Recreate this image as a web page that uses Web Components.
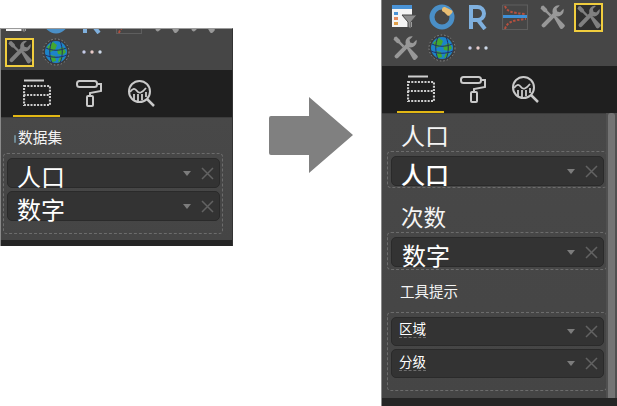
<!DOCTYPE html>
<html><head><meta charset="utf-8"><style>
html,body{margin:0;background:#fff}
body{width:617px;height:406px;overflow:hidden;font-family:"Noto Sans CJK SC",sans-serif}
#page{display:grid;grid-template-columns:233px 148px 236px;height:406px}
</style></head><body>
<div id="page">
<pbi-pane style="--top:28px;--bottom:6px;--h:218px;--tabpl:12px;--cpl:2px">
  <pane-toolbar slot="toolbar" style="height:41px;--pl:0px">
    <tool-icon name="doc"></tool-icon><tool-icon name="donut"></tool-icon><tool-icon name="r"></tool-icon><tool-icon name="chart"></tool-icon><tool-icon name="wrench"></tool-icon><tool-icon name="wrench"></tool-icon>
    <tool-icon name="wrench" selected></tool-icon><tool-icon name="globe"></tool-icon><tool-icon name="dots"></tool-icon>
  </pane-toolbar>
  <field-label size="14.7" top="11" left="11" marker>数据集</field-label>
  <field-well style="--mt:8px;--pb:12px">
    <field-pill size="24" left="10" dy="3">人口</field-pill>
    <field-pill size="24" left="10" dy="3">数字</field-pill>
  </field-well>
</pbi-pane>
<big-arrow></big-arrow>
<pbi-pane style="--top:0px;--bottom:8px;--h:406px;--tabpl:15px;--cpl:5px" scroll>
  <pane-toolbar slot="toolbar" style="height:66px;--pl:5px">
    <tool-icon name="doc"></tool-icon><tool-icon name="donut"></tool-icon><tool-icon name="r"></tool-icon><tool-icon name="chart"></tool-icon><tool-icon name="wrench"></tool-icon><tool-icon name="wrench" selected></tool-icon>
    <tool-icon name="wrench"></tool-icon><tool-icon name="globe"></tool-icon><tool-icon name="dots"></tool-icon>
  </pane-toolbar>
  <field-label size="24" top="8" left="14">人口</field-label>
  <field-well style="--mt:3px;--pb:1px">
    <field-pill size="24" left="10" dy="3" bold>人口</field-pill>
  </field-well>
  <field-label size="22.5" top="16" left="14">次数</field-label>
  <field-well style="--mt:3px;--pb:2px">
    <field-pill size="24" left="11" dy="3">数字</field-pill>
  </field-well>
  <field-label size="14.5" top="13" left="13">工具提示</field-label>
  <field-well style="--mt:13px;--pb:12px">
    <field-pill size="13.5" left="8" dy="-4" h="29" ghost>区域</field-pill>
    <field-pill size="13.5" left="8" dy="-3" h="29" ghost>分级</field-pill>
  </field-well>
</pbi-pane>
</div>
<script>
const wrench=(c)=>`<svg viewBox="0 0 26 26" width="26" height="26"><g fill="${c}"><path d="M2.500 2l2-.5 3.500 3.500.5 1.800 4 4-1.700 1.700-4-4L5 8 1.500 4.500zM14.500 13l1.800-1.800 8.700 9a2 2 0 0 1 0 3l-1 1a2 2 0 0 1-3 0z"/><path d="M24.500 4.800a6 6 0 0 1-7.800 7.200L6.200 22.800a2 2 0 0 1-3-2.900L13.800 9.200A6 6 0 0 1 20.800 1.500l-3.300 3.300.7 2.700 2.800.7z"/></g></svg>`;
const ICONS={
doc:`<svg viewBox="0 0 26 26" width="26" height="26"><path fill="#f4f4f4" d="M0 1h20v22H0z"/><path fill="#4a93d6" d="M0 1h20v4H0z"/><path fill="#4a93d6" d="M2 8h4v3H2z"/><path fill="#e38a5e" d="M2 13h4v3H2z"/><path fill="#e0a04a" d="M2 18h4v3H2z"/><path fill="#8d8d8d" stroke="#464646" d="M10 11h15l-6 7v7l-3-2v-5z"/></svg>`,
donut:`<svg viewBox="0 0 26 26" width="26" height="26"><circle cx="13" cy="13" r="10" fill="none" stroke="#4a8fc7" stroke-width="5"/><path d="M16 3l6 3a2 2 0 0 1 1 3l-2 2a2 2 0 0 1-3 0l-3-3a2 2 0 0 1 1-5z" fill="#e8bd73"/></svg>`,
r:`<svg viewBox="0 0 26 26" width="26" height="26"><path fill="none" stroke="#7fb0de" stroke-width="4" d="M6 25V3h6.500a6 6 0 0 1 0 13H6m7 0l7 9"/></svg>`,
chart:`<svg viewBox="0 0 26 26" width="26" height="26"><path fill="none" stroke="#5e5e5e" stroke-width="1.200" d="M.5 1v25M.5 25.500H26M25.500 1v25M.5 1H26"/><path fill="none" stroke="#b5503f" stroke-width="2" stroke-dasharray="2.500 1.500" d="M3 2c2 6 8 7 21 8M3 25c2-7 8-9 21-10"/><path stroke="#3f90d6" stroke-width="3" d="M1 12.500h24"/></svg>`,
wrench:wrench("#989898"),
wrenchSel:wrench("#808080"),
globe:`<svg viewBox="0 0 28 28" width="28" height="28"><circle cx="14" cy="14" r="13" fill="#3c3c3c" stroke="#8a8a8a" stroke-dasharray="1.500 2"/><circle cx="14" cy="14" r="11" fill="#1d84c8"/><path fill="#44a82f" d="M5 9l6-5 4 3-2 5-5 2zM15 12l6-3 3 5-3 3-5-1zM8 17l5 1 1 5-4 1zM18 19l3 0-2 4-3 1z"/><path fill="none" stroke="#22306a" stroke-width="1" d="M4 10c6 3 14 3 20 0M3 17c7 3 15 3 22 0M10 3c-3 7-3 15 0 22M18 3c3 7 3 15 0 22"/></svg>`,
dots:`<svg viewBox="0 0 26 8" width="26" height="8"><circle cx="5" cy="4" r="1.700" fill="#c5cbe8"/><circle cx="13" cy="4" r="1.700" fill="#e9cbc8"/><circle cx="21" cy="4" r="1.700" fill="#cdd9e8"/></svg>`
};
class Base extends HTMLElement{
  root(html){const r=this.attachShadow({mode:"open"});r.innerHTML=html;return r}
}
customElements.define("tool-icon",class extends Base{connectedCallback(){
  const n=this.getAttribute("name");const sel=this.hasAttribute("selected");
  this.root(`<style>:host{display:flex;align-items:center;justify-content:center;width:36.6px;height:31px;flex:none}
  .w{display:flex;align-items:center;justify-content:center;filter:blur(.55px)}
  .s{width:25px;height:25px;border:2px solid #f0cd3e;background:#2f2f2f;filter:blur(.4px)}</style>
  <div class="w ${sel?"s":""}">${ICONS[sel?"wrenchSel":n]}</div>`);
}});
customElements.define("pane-toolbar",class extends Base{connectedCallback(){
  this.root(`<style>:host{display:flex;flex-wrap:wrap;align-content:flex-end;padding:0 4px 2.5px var(--pl);background:#464646;box-sizing:border-box;overflow:hidden;width:100%;flex:none}</style><slot></slot>`);
}});
customElements.define("pane-tabs",class extends Base{connectedCallback(){
  this.root(`<style>:host{display:flex;height:47px;background:#1f1f1f;padding-left:var(--tabpl);flex:none;box-sizing:border-box}
  .t{width:47px;display:flex;align-items:center;justify-content:center;box-sizing:border-box;margin-right:5px;padding-top:1px;border-bottom:2px solid transparent}
  .t.on{border-bottom-color:#e2b714}
  svg{filter:blur(.45px)}</style>
  <div class="t on"><svg width="28" height="28" viewBox="0 0 28 28" fill="none" stroke="#cfcfcf"><path stroke-width="2" d="M1 1.500h20"/><path stroke-width="2.200" stroke-dasharray="2 1.300" d="M1 7h26v9H1zM1 16v10h26V16"/></svg></div>
  <div class="t"><svg width="28" height="28" viewBox="0 0 28 28" fill="none" stroke="#c9c9c9" stroke-width="2"><rect x="2" y="2" width="20" height="6" rx="2.500"/><path d="M22 5h4v7l-11 2v3"/><rect x="12" y="17" width="6" height="10" rx="1"/></svg></div>
  <div class="t"><svg width="28" height="28" viewBox="0 0 28 28" fill="none" stroke="#c9c9c9" stroke-width="2"><circle cx="12.500" cy="12.500" r="10.500"/><path d="M20 20l7 7" stroke-width="2.500"/><path stroke-width="1.800" d="M3 13c3-4 5-4 7-1s5 2 9-3M7 15v6M11 15v7M15 15v6M19 13v5"/></svg></div>`);
}});
customElements.define("pbi-pane",class extends Base{connectedCallback(){
  const sc=this.hasAttribute("scroll");
  this.root(`<style>:host{display:flex;flex-direction:column;box-sizing:border-box;margin-top:var(--top);height:var(--h);border-left:1px solid #8a8a8a;${sc?"":"border-top:1px solid #9a9a9a;border-right:1px solid #333;"}background:#464646;overflow:hidden;position:relative}
  .c{flex:1;min-height:0;display:flex;flex-direction:column;padding:0 0 0 var(--cpl);background:linear-gradient(#484848,#454545);border-top:1px solid #3c3c3c;box-sizing:border-box}
  .b{height:var(--bottom);background:#252525;flex:none}
  .tr{position:absolute;right:0;top:113px;bottom:var(--bottom);width:11px;background:#505050}
  .th{position:absolute;right:2px;top:113px;bottom:var(--bottom);width:7px;background:#747474;border-radius:3px 3px 0 0}</style>
  <slot name="toolbar"></slot><pane-tabs></pane-tabs><div class="c"><slot></slot></div><div class="b"></div>${sc?'<div class="tr"></div><div class="th"></div>':""}`);
}});
customElements.define("field-label",class extends Base{connectedCallback(){
  const s=this.getAttribute("size"),t=this.getAttribute("top"),l=this.getAttribute("left"),m=this.hasAttribute("marker");
  this.root(`<style>:host{display:block;flex:none;color:#f4f4f4;font-size:${s}px;line-height:${Math.round(s*1.1)}px;padding-top:${t}px;padding-left:${l}px;white-space:nowrap}
  i{display:inline-block;width:2px;height:8px;background:#6f8a95;margin-right:2px;vertical-align:middle;border-radius:1px}</style>${m?"<i></i>":""}<slot></slot>`);
}});
customElements.define("field-well",class extends Base{connectedCallback(){
  this.root(`<style>:host{display:flex;flex-direction:column;gap:3px;flex:none;margin-top:var(--mt);padding:4px 2px var(--pb) 3px;border:1px dashed #6c6c6c;border-radius:4px;box-sizing:border-box;width:220px}</style><slot></slot>`);
}});
customElements.define("field-pill",class extends Base{connectedCallback(){
  const s=this.getAttribute("size"),l=this.getAttribute("left"),dy=+this.getAttribute("dy"),h=this.getAttribute("h")||30,b=this.hasAttribute("bold"),g=this.hasAttribute("ghost");
  this.root(`<style>:host{display:flex;align-items:center;height:${h}px;box-sizing:border-box;background:#333;border:1px solid #2a2a2a;border-radius:5px;flex:none;padding:0 5px 0 ${l-1}px}
  .t{flex:1;color:#fff;font-size:${s}px;font-weight:${b?500:400};line-height:${g?18:24}px;transform:translateY(${dy}px);white-space:nowrap;${g?"text-decoration:underline dashed #6e6e6e 1px;text-underline-offset:3px;":""}}
  .a{width:0;height:0;border:4.500px solid transparent;border-top:5px solid #7c7c7c;border-bottom:0;margin-right:10px}
  svg{display:block}</style>
  <span class="t"><slot></slot></span><span class="a"></span><svg width="13" height="13" viewBox="0 0 13 13"><path d="M1 1l11 11M12 1L1 12" stroke="#626262" stroke-width="1.500"/></svg>`);
}});
customElements.define("big-arrow",class extends Base{connectedCallback(){
  this.root(`<style>:host{display:flex;align-items:flex-start;padding:97px 0 0 36px}</style>
  <svg width="85" height="77" viewBox="0 0 85 77"><path fill="#808080" d="M2 19H40V0L84 38 40 76V58H2a2 2 0 0 1-2-2V21a2 2 0 0 1 2-2z"/></svg>`);
}});
</script>
</body></html>
